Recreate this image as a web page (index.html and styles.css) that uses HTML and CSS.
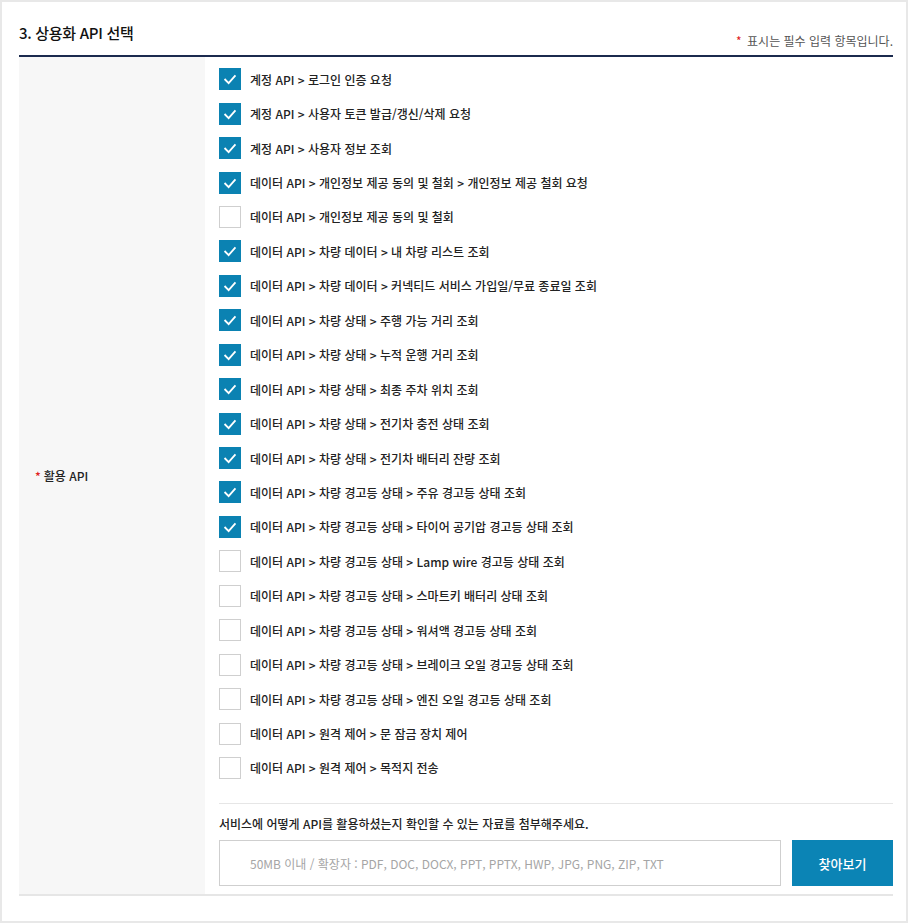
FILE: index.html
```html
<!DOCTYPE html>
<html lang="ko">
<head>
    <meta charset="UTF-8">
    <meta name="viewport" content="width=device-width, initial-scale=1.0">
    <title>상용화 API 선택</title>
    <link rel="stylesheet" href="styles.css">
</head>
<body>
    <div class="page">
        <div class="section-head">
            <h3 class="section-title">3. 상용화 API 선택</h3>
            <p class="required-note"><span class="star">*</span> 표시는 필수 입력 항목입니다.</p>
        </div>

        <div class="form-table">
            <div class="form-label"><span class="star">*</span> 활용 API</div>
            <div class="form-field">
                <ul class="api-list">
                    <li class="api-item"><span class="box checked"><svg viewBox="0 0 22 22"><polyline points="5,11 9.5,15.5 17,7"/></svg></span>계정 API &gt; 로그인 인증 요청</li>
                    <li class="api-item"><span class="box checked"><svg viewBox="0 0 22 22"><polyline points="5,11 9.5,15.5 17,7"/></svg></span>계정 API &gt; 사용자 토큰 발급/갱신/삭제 요청</li>
                    <li class="api-item"><span class="box checked"><svg viewBox="0 0 22 22"><polyline points="5,11 9.5,15.5 17,7"/></svg></span>계정 API &gt; 사용자 정보 조회</li>
                    <li class="api-item"><span class="box checked"><svg viewBox="0 0 22 22"><polyline points="5,11 9.5,15.5 17,7"/></svg></span>데이터 API &gt; 개인정보 제공 동의 및 철회 &gt; 개인정보 제공 철회 요청</li>
                    <li class="api-item"><span class="box"></span>데이터 API &gt; 개인정보 제공 동의 및 철회</li>
                    <li class="api-item"><span class="box checked"><svg viewBox="0 0 22 22"><polyline points="5,11 9.5,15.5 17,7"/></svg></span>데이터 API &gt; 차량 데이터 &gt; 내 차량 리스트 조회</li>
                    <li class="api-item"><span class="box checked"><svg viewBox="0 0 22 22"><polyline points="5,11 9.5,15.5 17,7"/></svg></span>데이터 API &gt; 차량 데이터 &gt; 커넥티드 서비스 가입일/무료 종료일 조회</li>
                    <li class="api-item"><span class="box checked"><svg viewBox="0 0 22 22"><polyline points="5,11 9.5,15.5 17,7"/></svg></span>데이터 API &gt; 차량 상태 &gt; 주행 가능 거리 조회</li>
                    <li class="api-item"><span class="box checked"><svg viewBox="0 0 22 22"><polyline points="5,11 9.5,15.5 17,7"/></svg></span>데이터 API &gt; 차량 상태 &gt; 누적 운행 거리 조회</li>
                    <li class="api-item"><span class="box checked"><svg viewBox="0 0 22 22"><polyline points="5,11 9.5,15.5 17,7"/></svg></span>데이터 API &gt; 차량 상태 &gt; 최종 주차 위치 조회</li>
                    <li class="api-item"><span class="box checked"><svg viewBox="0 0 22 22"><polyline points="5,11 9.5,15.5 17,7"/></svg></span>데이터 API &gt; 차량 상태 &gt; 전기차 충전 상태 조회</li>
                    <li class="api-item"><span class="box checked"><svg viewBox="0 0 22 22"><polyline points="5,11 9.5,15.5 17,7"/></svg></span>데이터 API &gt; 차량 상태 &gt; 전기차 배터리 잔량 조회</li>
                    <li class="api-item"><span class="box checked"><svg viewBox="0 0 22 22"><polyline points="5,11 9.5,15.5 17,7"/></svg></span>데이터 API &gt; 차량 경고등 상태 &gt; 주유 경고등 상태 조회</li>
                    <li class="api-item"><span class="box checked"><svg viewBox="0 0 22 22"><polyline points="5,11 9.5,15.5 17,7"/></svg></span>데이터 API &gt; 차량 경고등 상태 &gt; 타이어 공기압 경고등 상태 조회</li>
                    <li class="api-item"><span class="box"></span>데이터 API &gt; 차량 경고등 상태 &gt; Lamp wire 경고등 상태 조회</li>
                    <li class="api-item"><span class="box"></span>데이터 API &gt; 차량 경고등 상태 &gt; 스마트키 배터리 상태 조회</li>
                    <li class="api-item"><span class="box"></span>데이터 API &gt; 차량 경고등 상태 &gt; 워셔액 경고등 상태 조회</li>
                    <li class="api-item"><span class="box"></span>데이터 API &gt; 차량 경고등 상태 &gt; 브레이크 오일 경고등 상태 조회</li>
                    <li class="api-item"><span class="box"></span>데이터 API &gt; 차량 경고등 상태 &gt; 엔진 오일 경고등 상태 조회</li>
                    <li class="api-item"><span class="box"></span>데이터 API &gt; 원격 제어 &gt; 문 잠금 장치 제어</li>
                    <li class="api-item"><span class="box"></span>데이터 API &gt; 원격 제어 &gt; 목적지 전송</li>
                </ul>

                <div class="attach">
                    <p class="attach-desc">서비스에 어떻게 API를 활용하셨는지 확인할 수 있는 자료를 첨부해주세요.</p>
                    <div class="attach-row">
                        <input type="text" class="file-name" placeholder="50MB 이내 / 확장자 : PDF, DOC, DOCX, PPT, PPTX, HWP, JPG, PNG, ZIP, TXT" readonly>
                        <button type="button" class="btn-find">찾아보기</button>
                    </div>
                </div>
            </div>
        </div>
    </div>
</body>
</html>
```

FILE: styles.css
```css
* {
    box-sizing: border-box;
}

body {
    margin: 0;
    font-family: "Noto Sans CJK KR", "Noto Sans", sans-serif;
    color: #222;
    background: #fff;
}

.page {
    width: 908px;
    height: 923px;
    border: 2px solid #e8e8e8;
    padding: 0 13px 0 17px;
}

.section-head {
    display: flex;
    justify-content: space-between;
    align-items: flex-end;
    height: 55px;
    padding-bottom: 6px;
    border-bottom: 2px solid #1b2a4e;
}

.section-title {
    margin: 0 0 6px;
    font-size: 15px;
    font-weight: 500;
    letter-spacing: -0.3px;
    color: #111;
}

.required-note {
    margin: 0;
    font-size: 12px;
    color: #555;
}

.star {
    color: #e02020;
    margin-right: 2px;
}

.form-table {
    display: flex;
    border-bottom: 2px solid #e6e6e6;
}

.form-label {
    width: 186px;
    flex-shrink: 0;
    background: #f7f7f7;
    display: flex;
    align-items: center;
    padding-left: 16px;
    font-size: 12px;
    font-weight: 500;
}

.form-label .star {
    margin-right: 3px;
}

.form-field {
    flex: 1;
    padding: 5px 0 8px 14px;
}

.api-list {
    list-style: none;
    margin: 0;
    padding: 0;
}

.api-item {
    display: flex;
    align-items: center;
    height: 34.45px;
    font-size: 12px;
    font-weight: 500;
    color: #222;
}

.box {
    width: 22px;
    height: 22px;
    margin-right: 9px;
    flex-shrink: 0;
    border: 1px solid #cfcfcf;
    background: #fff;
}

.box.checked {
    border-color: #0b82b2;
    background: #0b82b2;
}

.box svg {
    display: block;
    width: 20px;
    height: 20px;
    fill: none;
    stroke: #fff;
    stroke-width: 2;
}

.attach {
    margin-top: 18px;
    border-top: 1px solid #e6e6e6;
    padding-top: 11px;
}

.attach-desc {
    margin: 0 0 8px;
    font-size: 12px;
    font-weight: 500;
    color: #222;
}

.attach-row {
    display: flex;
    gap: 11px;
}

.file-name {
    width: 562px;
    height: 46px;
    border: 1px solid #cfcfcf;
    padding: 0 0 0 30px;
    font-family: inherit;
    font-size: 12px;
    color: #999;
    outline: none;
}

.file-name::placeholder {
    color: #a5a5a5;
}

.btn-find {
    width: 101px;
    height: 46px;
    border: none;
    background: #0b84b5;
    color: #fff;
    font-family: inherit;
    font-size: 13px;
    font-weight: 500;
    cursor: pointer;
}
```
